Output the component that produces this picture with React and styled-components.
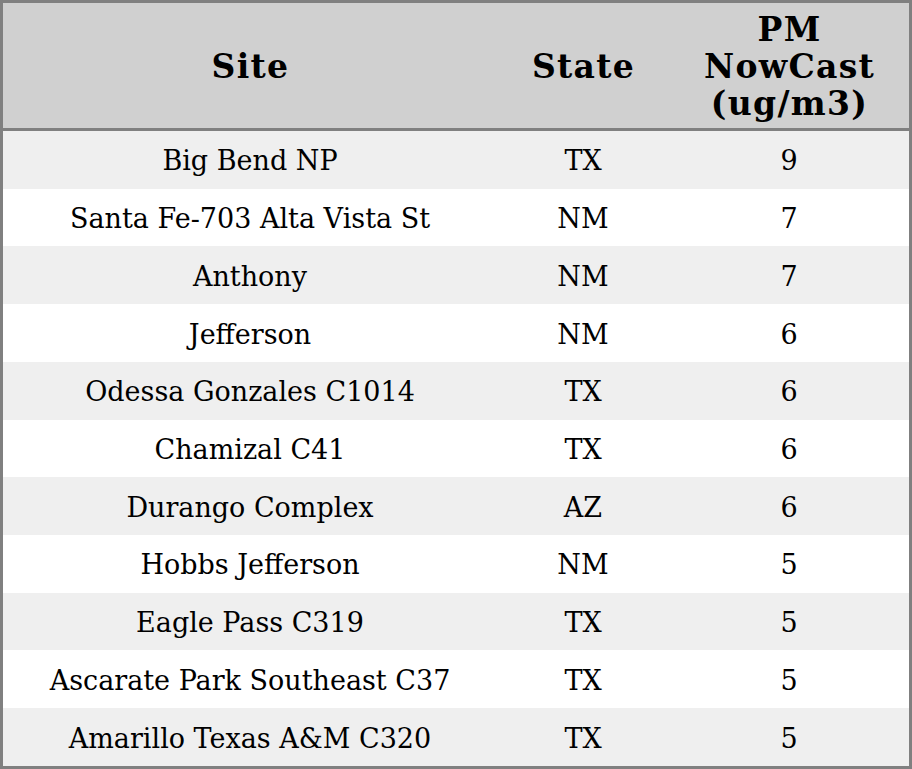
import styled, { createGlobalStyle } from "styled-components";

const GlobalStyle = createGlobalStyle`
    html, body {
        margin: 0;
        padding: 0;
        background: #fff;
    }
`;

const rows = [
    ["Big Bend NP", "TX", 9],
    ["Santa Fe-703 Alta Vista St", "NM", 7],
    ["Anthony", "NM", 7],
    ["Jefferson", "NM", 6],
    ["Odessa Gonzales C1014", "TX", 6],
    ["Chamizal C41", "TX", 6],
    ["Durango Complex", "AZ", 6],
    ["Hobbs Jefferson", "NM", 5],
    ["Eagle Pass C319", "TX", 5],
    ["Ascarate Park Southeast C37", "TX", 5],
    ["Amarillo Texas A&M C320", "TX", 5],
];

const Table = styled.table`
    width: 912px;
    border: 3px solid #808080;
    border-collapse: separate;
    border-spacing: 0;
    table-layout: fixed;
    font-family: "DejaVu Serif", serif;
    color: #000;
`;

const HeadRow = styled.tr`
    height: 128px;
    background: #d0d0d0;
`;

const HeadCell = styled.th`
    padding: 4px 0 0 1px;
    border-bottom: 3px solid #808080;
    font-size: 33px;
    font-weight: bold;
    letter-spacing: 1.3px;
    line-height: 36.7px;
    text-align: center;
    vertical-align: middle;
`;

const Row = styled.tr`
    height: 57.73px;
    background: ${(p) => (p.$odd ? "#efefef" : "#ffffff")};
`;

const Cell = styled.td`
    padding: 2px 0 0;
    font-size: 27px;
    text-align: center;
    vertical-align: middle;
`;

export default function App() {
    return (
        <>
            <GlobalStyle />
            <Table>
                <colgroup>
                    <col style={{ width: 494 }} />
                    <col style={{ width: 172 }} />
                    <col style={{ width: 240 }} />
                </colgroup>
                <thead>
                    <HeadRow>
                        <HeadCell>Site</HeadCell>
                        <HeadCell>State</HeadCell>
                        <HeadCell>
                            PM
                            <br />
                            NowCast
                            <br />
                            (ug/m3)
                        </HeadCell>
                    </HeadRow>
                </thead>
                <tbody>
                    {rows.map(([site, state, value], i) => (
                        <Row key={site} $odd={i % 2 === 0}>
                            <Cell>{site}</Cell>
                            <Cell>{state}</Cell>
                            <Cell>{value}</Cell>
                        </Row>
                    ))}
                </tbody>
            </Table>
        </>
    );
}
